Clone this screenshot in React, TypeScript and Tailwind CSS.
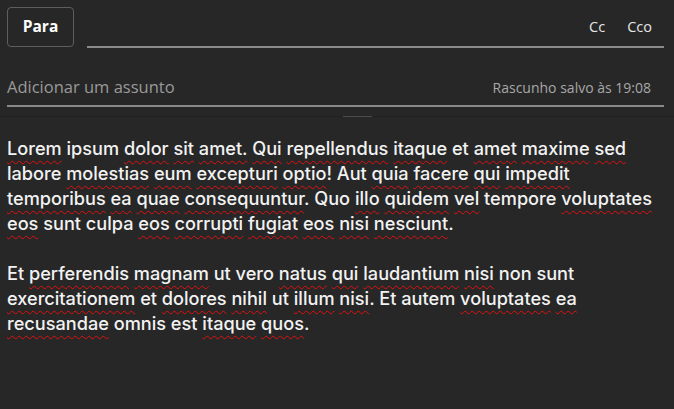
import React from "react";

const W = ({ children }: { children: React.ReactNode }) => (
  <span className="underline decoration-wavy decoration-[#e01010] decoration-1 underline-offset-[5px]">{children}</span>
);

const para1: React.ReactNode[] = [
  <><W>Lorem</W> ipsum <W>dolor</W> <W>sit</W> <W>amet.</W> <W>Qui</W> <W>repellendus</W> <W>itaque</W> et <W>amet</W> <W>maxime</W> <W>sed</W></>,
  <>labore <W>molestias</W> <W>eum</W> <W>excepturi</W> <W>optio</W>! Aut <W>quia</W> <W>facere</W> <W>qui</W> <W>impedit</W></>,
  <><W>temporibus</W> <W>ea</W> <W>quae</W> <W>consequuntur</W>. Quo <W>illo</W> <W>quidem</W> <W>vel</W> tempore <W>voluptates</W></>,
  <><W>eos</W> sunt culpa <W>eos</W> <W>corrupti</W> <W>fugiat</W> <W>eos</W> <W>nisi</W> <W>nesciunt</W>.</>,
];
const para2: React.ReactNode[] = [
  <>Et <W>perferendis</W> <W>magnam</W> ut vero <W>natus</W> <W>qui</W> <W>laudantium</W> <W>nisi</W> non sunt</>,
  <><W>exercitationem</W> et <W>dolores</W> <W>nihil</W> ut <W>illum</W> <W>nisi</W>. Et autem <W>voluptates</W> <W>ea</W></>,
  <><W>recusandae</W> omnis est <W>itaque</W> <W>quos</W>.</>,
];

export default function App() {
  return (
    <div className="w-[674px] h-[409px] bg-[#272727] text-[#f2f2f2] overflow-hidden" style={{ fontFamily: '"Open Sans", "Noto Sans", sans-serif' }}>
      <div className="flex items-end pl-[7px] pr-[10px] pt-[7px]">
        <div className="w-[67px] h-[40px] rounded-[4px] border border-[#5e5e5e] flex items-center justify-center text-[15.5px] font-bold text-white">Para</div>
        <div className="flex-1 ml-[13px] h-[41px] -mb-[1px] border-b-2 border-[#8a8a8a] flex items-center justify-end gap-[22px] pr-[12px] text-[14.5px] text-[#e6e6e6]">
          <span>Cc</span>
          <span>Cco</span>
        </div>
      </div>
      <div className="ml-[7px] mr-[10px] h-[60px] pt-[28px] border-b-2 border-[#8a8a8a] flex items-start justify-between">
        <span className="text-[16.5px] text-[#9a9a9a] leading-[24px]">Adicionar um assunto</span>
        <span className="text-[14px] text-[#a8a8a8] leading-[24px] pr-[13px] pt-[1px]">Rascunho salvo às 19:08</span>
      </div>
      <div className="relative h-[10px] border-b border-[#202020]">
        <div className="absolute left-[343px] bottom-[-1px] w-[29px] h-[1px] bg-[#4a4a4a]" />
      </div>
      <div className="px-[7px] pt-[19px] text-[18.15px] font-medium leading-[25px]" style={{ fontFamily: '"Inter", "Noto Sans", sans-serif' }}>
        {para1.map((l, i) => <div key={i} className="whitespace-nowrap">{l}</div>)}
        <div className="h-[25px]" />
        {para2.map((l, i) => <div key={i} className="whitespace-nowrap">{l}</div>)}
      </div>
    </div>
  );
}
